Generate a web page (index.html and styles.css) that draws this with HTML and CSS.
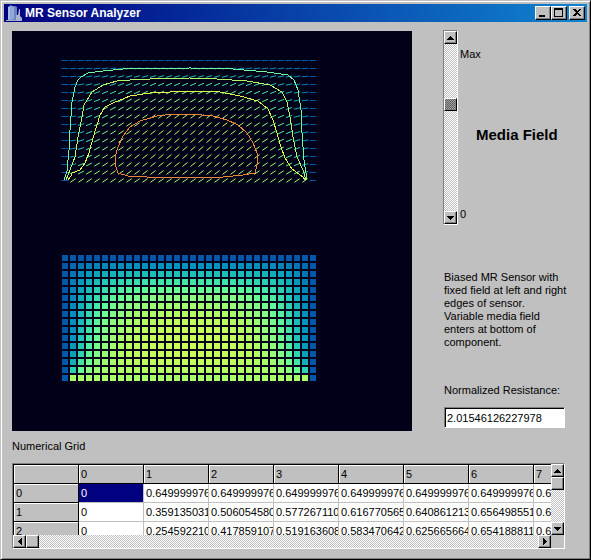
FILE: index.html
```html
<!DOCTYPE html>
<html lang="en">
<head>
<meta charset="utf-8">
<title>MR Sensor Analyzer</title>
<link rel="stylesheet" href="styles.css">
</head>
<body>
<main class="window">
  <header class="titlebar">
    <svg class="app-icon" viewBox="0 0 16 16" aria-hidden="true">
      <path d="M2 2l3-2 1 1v14H2z" fill="#8ca4dc"/>
      <path d="M6 1h3l2 1v13H6z" fill="#6c84c0"/>
      <path d="M3 2v12M7 2v12" stroke="#c4d0f0"/>
      <path d="M10 15v-5h2l1-6h1v7l2 2v2z" fill="#a8b4d0"/>
      <path d="M0 15.500h16" stroke="#a8b0c8"/>
    </svg>
    <h1 class="title">MR Sensor Analyzer</h1>
    <div class="window-buttons">
      <button class="btn" aria-label="Minimize"><svg width="12" height="10"><path d="M2 7h6v2H2z"/></svg></button>
      <button class="btn" aria-label="Maximize"><svg width="12" height="10"><path d="M1 0h9v9H1zM2 2v6h7V2z" fill-rule="evenodd"/></svg></button>
      <button class="btn btn-close" aria-label="Close"><svg width="12" height="10"><path d="M2 1h2l2 2 2-2h2L7 4.500 10 8H8L6 6 4 8H2l3-3.500z"/></svg></button>
    </div>
  </header>

  <div class="body">
    <section class="top">
      <svg class="plot" viewBox="0 0 400 400" role="img" aria-label="Magnetization field and contours">
        <g id="needles"></g>
        <g class="contours">
          <path class="level-1" d="M52 149L55 140 57 119 58 99 60 71 63 56 66 49 69 46 76 42 91 40 111 38 178 37 221 38 255 41 276 44 282 49 286 59 289 79 290 102 292 129 295 149"/>
          <path class="level-2" d="M54 149L58 139 63 126 66 106 70 86 72 74 80 61 91 54 105 50 118 49 138 48 178 47 205 48 235 50 258 54 270 61 275 71 278 86 281 106 285 126 291 139 294 149"/>
          <path class="level-3" d="M56 149L59 145 60 142 68 139 73 132 77 122 81 107 85 94 88 84 93 76 101 72 118 65 138 62 178 60 208 61 228 65 246 70 256 78 261 89 265 102 269 116 273 127 280 138 291 146 293 149"/>
          <path class="level-4" d="M178 146L135 146 116 145 106 142 104 136 103 126 106 116 111 105 118 96 128 90 145 85 161 83 178 83 201 85 215 89 226 94 235 102 241 112 245 122 245 134 243 142 231 144 211 146z"/>
        </g>
        <g id="cells"></g>
      </svg>

      <aside class="side">
        <div class="slider-row">
          <div class="scroll scroll-v">
            <button class="btn arrow" aria-label="Increase"><svg width="7" height="4"><path d="M3 0h1l3 4H0z"/></svg></button>
            <button class="btn thumb" aria-label="Media field position"></button>
            <button class="btn arrow" aria-label="Decrease"><svg width="7" height="4"><path d="M0 0h7L4 4H3z"/></svg></button>
          </div>
          <div class="scale">
            <span>Max</span>
            <h2 class="field-name">Media Field</h2>
            <span>0</span>
          </div>
        </div>
        <p class="note">Biased MR Sensor with<br>fixed field at left and right<br>edges of sensor.<br>Variable media field<br>enters at bottom of<br>component.</p>
        <label class="label" for="resistance">Normalized Resistance:</label>
        <input class="input" id="resistance" value="2.01546126227978">
      </aside>
    </section>

    <h2 class="label grid-label">Numerical Grid</h2>
    <section class="grid">
      <div class="grid-view">
        <table class="table">
          <thead><tr><th></th><th>0</th><th>1</th><th>2</th><th>3</th><th>4</th><th>5</th><th>6</th><th>7</th></tr></thead>
          <tbody>
            <tr><th>0</th><td class="selected">0</td><td>0.649999976</td><td>0.649999976</td><td>0.649999976</td><td>0.649999976</td><td>0.649999976</td><td>0.649999976</td><td>0.6</td></tr>
            <tr><th>1</th><td>0</td><td>0.359135031</td><td>0.506054580</td><td>0.577267110</td><td>0.616770565</td><td>0.640861213</td><td>0.656498551</td><td>0.6</td></tr>
            <tr><th>2</th><td>0</td><td>0.254592210</td><td>0.417859107</td><td>0.519163608</td><td>0.583470642</td><td>0.625665664</td><td>0.654188811</td><td>0.6</td></tr>
          </tbody>
        </table>
      </div>
      <div class="scroll grid-v">
        <button class="btn arrow" aria-label="Scroll up"><svg width="7" height="4"><path d="M3 0h1l3 4H0z"/></svg></button>
        <button class="btn thumb-plain" aria-label="Vertical position"></button>
        <button class="btn arrow push" aria-label="Scroll down"><svg width="7" height="4"><path d="M0 0h7L4 4H3z"/></svg></button>
      </div>
      <div class="scroll grid-h">
        <button class="btn arrow" aria-label="Scroll left"><svg width="4" height="7"><path d="M4 0v7L0 4V3z"/></svg></button>
        <button class="btn thumb-plain" aria-label="Horizontal position"></button>
        <button class="btn arrow push" aria-label="Scroll right"><svg width="4" height="7"><path d="M0 0v7l4-3V3z"/></svg></button>
      </div>
    </section>
  </div>
</main>
<script src="plot.js"></script>
</body>
</html>
```
FILE: styles.css
```css
* { box-sizing: border-box; }
body {
  margin: 0;
  background: #c0c0c0;
  color: #000;
  font: 11px/13px "Liberation Sans", Arial, sans-serif;
}
h1, h2, p { margin: 0; font-size: inherit; font-weight: normal; }

.window {
  min-height: 100vh;
  padding: 3px;
  border: 1px solid;
  border-color: #c0c0c0 #000 #000 #c0c0c0;
  box-shadow: inset 1px 1px #fff, inset -1px -1px #808080;
}
.titlebar {
  display: flex;
  align-items: center;
  height: 18px;
  padding: 0 2px;
  background: linear-gradient(90deg, #000080, #1084d0);
}
.app-icon { width: 16px; height: 16px; }
.title {
  flex: 1;
  padding-left: 3px;
  color: #fff;
  font: bold 12px/18px "Liberation Sans", Arial, sans-serif;
}
.window-buttons { display: flex; }
.btn {
  display: flex;
  align-items: center;
  justify-content: center;
  width: 16px;
  height: 14px;
  padding: 0;
  border: 1px solid;
  border-color: #fff #000 #000 #fff;
  background: #c0c0c0;
  box-shadow: inset -1px -1px #808080;
}
.btn svg { flex: none; shape-rendering: crispEdges; }
.btn-close { margin-left: 2px; }

.body { padding: 8px 22px 0 8px; }
.top { display: flex; gap: 31px; }
.plot {
  flex: none;
  width: 400px;
  height: 400px;
  margin-top: 1px;
  background: #000018;
}
.contours { fill: none; stroke-width: 1; shape-rendering: crispEdges; }
.level-1 { stroke: #70f8a0; }
.level-2 { stroke: #b0f868; }
.level-3 { stroke: #e0f848; }
.level-4 { stroke: #e88838; }

.side { flex: 1; min-width: 0; }
.slider-row { display: flex; height: 195px; gap: 2px; }
.scroll {
  display: flex;
  background: repeating-conic-gradient(#fff 0 25%, #c0c0c0 0 50%) 0 0 / 2px 2px;
}
.scroll-v {
  flex-direction: column;
  justify-content: space-between;
  width: 15px;
  border: 1px solid;
  border-color: #808080 #fff #fff #808080;
}
.arrow { flex: none; width: 13px; height: 13px; }
.thumb {
  width: 13px;
  height: 13px;
  margin-bottom: 46px;
  background: repeating-conic-gradient(#606060 0 25%, #a0a0a0 0 50%) 0 0 / 2px 2px;
}
.scale {
  display: flex;
  flex-direction: column;
  justify-content: space-between;
  flex: 1;
  padding: 18px 0 4px;
}
.field-name {
  padding-left: 16px;
  font: bold 15px/16px "Liberation Sans", Arial, sans-serif;
}
.note { margin: 46px 0 35px; padding-left: 1px; white-space: nowrap; }
.label { display: block; padding-left: 1px; }
.input {
  display: block;
  width: 121px;
  height: 21px;
  margin: 10px 0 0 1px;
  padding: 0 2px;
  border: 1px solid;
  border-color: #808080 #fff #fff #808080;
  box-shadow: inset 1px 1px #000;
  background: #fff;
  font: 11px/13px "Liberation Sans", Arial, sans-serif;
}
.grid-label { padding: 9px 0 10px; }
.grid {
  display: grid;
  grid-template: 71px 13px / minmax(0, 1fr) 13px;
  border: 1px solid;
  border-color: #808080 #fff #fff #808080;
}
.grid-view { overflow: hidden; border: 1px solid #000; border-width: 1px 0 0 1px; }
.table { width: 585px; table-layout: fixed; border-collapse: separate; border-spacing: 0; }
.table th, .table td {
  height: 19px;
  padding: 0 0 0 2px;
  border: 1px solid #c0c0c0;
  border-width: 0 1px 1px 0;
  background: #fff;
  overflow: hidden;
  text-align: left;
  font-size: 11px;
  line-height: 13px;
  font-weight: normal;
  white-space: nowrap;
}
.table th { background: #c0c0c0; border-color: #000; box-shadow: inset 1px 1px #fff; }
.table .selected { background: #000080; color: #fff; }
.grid-v { flex-direction: column; }
.thumb-plain { width: 13px; height: 13px; flex: none; }
.grid-v .push { margin-top: auto; }
.grid-h .push { margin-left: auto; }
```
FILE: plot.js
```js
const COLS = 32, ROWS = 16, STEP = 8, LEFT = 50;
const NS = "http://www.w3.org/2000/svg";

// Relax the magnetization angle; row 0 is the bottom (media) edge.
const field = Array.from({ length: ROWS }, (_, r) =>
  Array.from({ length: COLS }, (_, c) => (r === 0 && c > 0 && c < COLS - 1 ? 0.65 : 0)));
for (let n = 0; n < 600; n++) {
  for (let r = 1; r < ROWS - 1; r++) {
    for (let c = 1; c < COLS - 1; c++) {
      const t = field[r][c];
      const torque = 0.0415 * Math.cos(t) - 0.0393 * Math.sin(t) * Math.cos(t);
      field[r][c] = (field[r - 1][c] + field[r + 1][c] + field[r][c - 1] + field[r][c + 1] + torque) / 4;
    }
  }
}

const stops = [[0, 0, 88, 170], [0.18, 0, 150, 190], [0.35, 40, 205, 180], [0.5, 100, 255, 150], [0.65, 170, 255, 105], [0.8, 220, 255, 80]];
function color(v) {
  let i = 1;
  while (i < stops.length - 1 && v > stops[i][0]) i++;
  const a = stops[i - 1], b = stops[i];
  const k = Math.min(1, (v - a[0]) / (b[0] - a[0]));
  return `rgb(${[1, 2, 3].map(j => Math.round(a[j] + (b[j] - a[j]) * k)).join(",")})`;
}
function add(parent, name, attrs) {
  const el = document.createElementNS(NS, name);
  for (const key in attrs) el.setAttribute(key, attrs[key]);
  parent.appendChild(el);
}
const needles = document.getElementById("needles");
const cells = document.getElementById("cells");
for (let r = 0; r < ROWS; r++) {
  for (let c = 0; c < COLS; c++) {
    const v = field[r][c], x = LEFT + c * STEP, row = ROWS - 1 - r;
    const dx = 3.3 * Math.cos(v), dy = 3 * Math.sin(v), y = 29.5 + row * STEP;
    add(needles, "line", { x1: x + 3 - dx, x2: x + 3 + dx, y1: y + dy, y2: y - dy, stroke: color(v) });
    add(cells, "rect", { x, y: 224 + row * STEP, width: 6, height: 6, fill: color(v) });
  }
}
```
